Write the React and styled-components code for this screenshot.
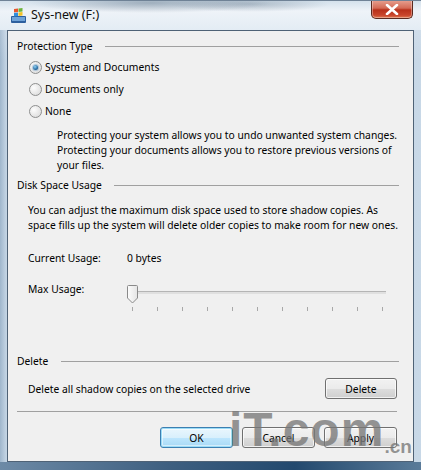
import React from 'react';
import styled, { createGlobalStyle, css } from 'styled-components';

const Global = createGlobalStyle`
  html, body {
    margin: 0;
    padding: 0;
    background: #fff;
  }
  body {
    font-family: "Noto Sans", "Open Sans", "DejaVu Sans", sans-serif;
    font-size: 10.3px;
    color: #000;
  }
`;

const Frame = styled.div`
  position: relative;
  width: 421px;
  height: 470px;
  display: flex;
  flex-direction: column;
  overflow: hidden;
  background:
    linear-gradient(180deg, rgba(255,255,255,0.55) 0px, rgba(255,255,255,0.15) 28px, transparent 60px),
    linear-gradient(90deg, #9fb6cc 0px, #c2d3e3 6px, #b6c9dc 50%, #c8d8e7 100%);
  border-top: 1px solid #6f8296;
  box-sizing: border-box;
`;

const TitleBar = styled.div`
  height: 29px;
  display: flex;
  align-items: flex-start;
  padding-left: 10px;
  background:
    radial-gradient(ellipse 120px 10px at 150px 2px, rgba(90,110,130,0.45), transparent),
    radial-gradient(ellipse 80px 8px at 250px 3px, rgba(90,110,130,0.35), transparent),
    linear-gradient(180deg, #d4e1ec 0%, #eef3f8 35%, #e3ecf4 100%);
`;

const AppIcon = styled.svg`
  width: 17px;
  height: 17px;
  margin-top: 6px;
  flex: none;
`;

const Title = styled.div`
  margin-left: 4px;
  margin-top: 5px;
  font-size: 12.5px;
  color: #111;
  line-height: 17px;
  flex: 1;
`;

const CloseBtn = styled.div`
  width: 40px;
  height: 18px;
  margin-right: 8px;
  margin-top: -1px;
  border: 1px solid #5a2a20;
  border-top: none;
  border-radius: 0 0 5px 5px;
  background: linear-gradient(180deg, #e8a393 0%, #d46a55 45%, #b8301a 55%, #c9462c 85%, #e07a52 100%);
  display: flex;
  align-items: center;
  justify-content: center;
  box-shadow: inset 0 0 0 1px rgba(255,255,255,0.35);
`;

const Client = styled.div`
  margin: 0 7px 0 7px;
  height: 432px;
  border: 1px solid #4f6276;
  background: #f0f0f0;
  padding: 8px 14px 0 9px;
  box-sizing: border-box;
  display: flex;
  flex-direction: column;
`;

const BottomEdge = styled.div`
  flex: 1;
  background: linear-gradient(90deg, #6d8aa6, #3e5f80 40%, #23496e 70%, #5a7b99);
`;

const GroupHead = styled.div`
  display: flex;
  align-items: center;
  line-height: 15px;
  margin-top: ${({ $gap }) => $gap || 0}px;
  white-space: nowrap;
  &::after {
    content: '';
    flex: 1;
    height: 1px;
    background: #a0a0a0;
    margin-left: ${({ $lineGap }) => $lineGap || 12}px;
  }
`;

const RadioList = styled.div`
  margin-top: 2px;
  padding-left: 12px;
  display: flex;
  flex-direction: column;
`;

const RadioRow = styled.label`
  height: 22px;
  display: flex;
  align-items: center;
  gap: 3px;
`;

const RadioDot = styled.span`
  width: 11px;
  height: 11px;
  border-radius: 50%;
  border: 1px solid #8e8f8f;
  background: radial-gradient(circle at 35% 35%, #fdfdfd, #d6d6d6);
  display: flex;
  align-items: center;
  justify-content: center;
  flex: none;
  ${({ $checked }) =>
    $checked &&
    css`
      &::after {
        content: '';
        width: 5px;
        height: 5px;
        border-radius: 50%;
        background: radial-gradient(circle at 40% 35%, #8fd0f5, #1a5e96 70%, #0e3f6e);
        box-shadow: 0 0 1px 1px rgba(40,110,170,0.35);
      }
    `}
`;

const Para = styled.div`
  line-height: 15px;
  margin-top: ${({ $gap }) => $gap || 0}px;
  padding-left: ${({ $indent }) => $indent || 0}px;
  white-space: nowrap;
`;

const InfoRow = styled.div`
  display: flex;
  align-items: ${({ $align }) => $align || 'center'};
  line-height: 15px;
  margin-top: ${({ $gap }) => $gap || 0}px;
  padding-left: 11px;
`;

const Label = styled.div`
  width: 99px;
  flex: none;
`;

const Slider = styled.div`
  width: 262px;
  height: 30px;
  display: flex;
  flex-direction: column;
`;

const SliderTrackWrap = styled.div`
  position: relative;
  height: 20px;
  display: flex;
  align-items: center;
  padding-left: 4px;
`;

const Track = styled.div`
  height: 2px;
  width: 255px;
  background: #e0e0e0;
  border-top: 1px solid #b5b5b5;
`;

const Thumb = styled.svg`
  position: absolute;
  left: 0;
  top: 3px;
`;

const Ticks = styled.div`
  display: flex;
  justify-content: space-between;
  width: 251px;
  padding-left: 5px;
  margin-top: 5px;
`;

const Tick = styled.span`
  width: 1px;
  height: 4px;
  background: #a8a8a8;
`;

const ActionRow = styled.div`
  display: flex;
  align-items: center;
  justify-content: space-between;
  margin-top: 9px;
  padding-left: 11px;
  padding-right: 2px;
`;

const Button = styled.button`
  width: ${({ $w }) => $w || 73}px;
  height: 21px;
  font-family: inherit;
  font-size: 10.3px;
  color: #000;
  padding: 0;
  border-radius: 3px;
  border: 1px solid #707070;
  background: linear-gradient(180deg, #f2f2f2 0%, #ebebeb 50%, #dddddd 51%, #cfcfcf 100%);
  box-shadow: inset 0 0 0 1px rgba(255,255,255,0.7);
  ${({ $default }) =>
    $default &&
    css`
      border-color: #3c7fb1;
      background: linear-gradient(180deg, #eaf6fd 0%, #d9f0fc 50%, #bee6fd 51%, #a7d9f5 100%);
      box-shadow: inset 0 0 0 1px #9bdcf7, inset 0 0 0 2px rgba(255,255,255,0.5);
    `}
`;

const Separator = styled.div`
  height: 1px;
  background: #a0a0a0;
  margin-top: 12px;
  margin-right: 2px;
`;

const ButtonBar = styled.div`
  display: flex;
  justify-content: flex-end;
  gap: 9px;
  margin-top: 15px;
  padding-right: 2px;
`;

const Watermark = styled.div`
  position: absolute;
  left: 229px;
  top: 405px;
  white-space: nowrap;
  font-family: "Liberation Sans", Arial, sans-serif;
  font-weight: bold;
  font-size: 48px;
  line-height: 48px;
  letter-spacing: 1px;
  color: rgba(120, 120, 120, 0.78);
  pointer-events: none;
`;

const WmTail = styled.span`
  font-size: 19px;
  letter-spacing: 0;
  vertical-align: -7px;
`;

const radios = [
  { label: 'System and Documents', checked: true },
  { label: 'Documents only' },
  { label: 'None' },
];

export default function App() {
  return (
    <>
      <Global />
      <Frame>
        <TitleBar>
          <AppIcon viewBox="0 0 17 17">
            <rect x="1" y="9" width="15" height="7" rx="1" fill="#2c5f9e" />
            <rect x="2" y="10" width="13" height="4" fill="#6fa3d8" />
            <path d="M4 2 L8 1.5 L8 5 L4 5.5 Z" fill="#e8552c" />
            <path d="M8.5 1.4 L12.5 1 L12.5 4.6 L8.5 5 Z" fill="#6bb33a" />
            <path d="M4 6 L8 5.6 L8 9 L4 9.4 Z" fill="#2f8ddc" />
            <path d="M8.5 5.5 L12.5 5.1 L12.5 8.6 L8.5 9 Z" fill="#f3c224" />
          </AppIcon>
          <Title>Sys-new (F:)</Title>
          <CloseBtn>
            <svg width="14" height="11" viewBox="0 0 14 11">
              <path d="M2 1 L12 10 M12 1 L2 10" stroke="#fff" strokeWidth="2.6" strokeLinecap="round" />
            </svg>
          </CloseBtn>
        </TitleBar>

        <Client>
          <GroupHead $lineGap={12}>Protection Type</GroupHead>
          <RadioList>
            {radios.map((r) => (
              <RadioRow key={r.label}>
                <RadioDot $checked={r.checked} />
                {r.label}
              </RadioRow>
            ))}
          </RadioList>
          <Para $gap={6} $indent={40}>
            Protecting your system allows you to undo unwanted system changes.
            <br />
            Protecting your documents allows you to restore previous versions of
            <br />
            your files.
          </Para>

          <GroupHead $gap={5} $lineGap={12}>Disk Space Usage</GroupHead>
          <Para $gap={10} $indent={11}>
            You can adjust the maximum disk space used to store shadow copies. As
            <br />
            space fills up the system will delete older copies to make room for new ones.
          </Para>

          <InfoRow $gap={18}>
            <Label>Current Usage:</Label>
            <div>0 bytes</div>
          </InfoRow>

          <InfoRow $gap={16} $align="flex-start">
            <Label>Max Usage:</Label>
            <Slider>
              <SliderTrackWrap>
                <Track />
                <Thumb width="11" height="19" viewBox="0 0 11 19">
                  <defs>
                    <linearGradient id="tg" x1="0" x2="1">
                      <stop offset="0" stopColor="#fdfdfd" />
                      <stop offset="1" stopColor="#e4e4e4" />
                    </linearGradient>
                  </defs>
                  <path d="M1.5 0.5 H9.5 Q10.5 0.5 10.5 1.5 V13 L5.5 18 L0.5 13 V1.5 Q0.5 0.5 1.5 0.5 Z" fill="url(#tg)" stroke="#8a8a8a" />
                </Thumb>
              </SliderTrackWrap>
              <Ticks>
                {Array.from({ length: 11 }).map((_, i) => (
                  <Tick key={i} />
                ))}
              </Ticks>
            </Slider>
          </InfoRow>

          <GroupHead $gap={42} $lineGap={13}>Delete</GroupHead>
          <ActionRow>
            <span>Delete all shadow copies on the selected drive</span>
            <Button $w={72}>Delete</Button>
          </ActionRow>

          <Separator />

          <ButtonBar>
            <Button $default>OK</Button>
            <Button>Cancel</Button>
            <Button>Apply</Button>
          </ButtonBar>
        </Client>
        <BottomEdge />

        <Watermark>
          iT.com<WmTail>.cn</WmTail>
        </Watermark>
      </Frame>
    </>
  );
}
